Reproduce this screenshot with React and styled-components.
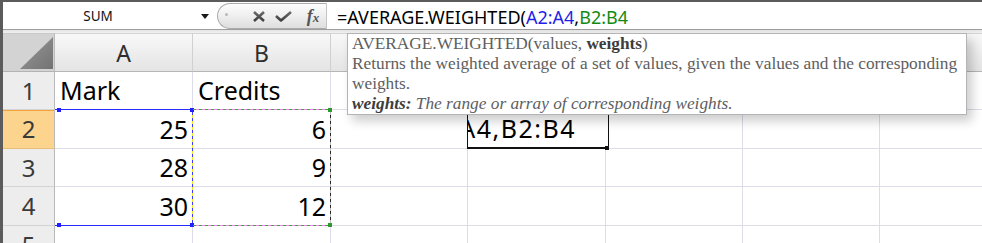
import React from 'react';
import styled, { createGlobalStyle } from 'styled-components';

const Global = createGlobalStyle`
  html, body { margin: 0; padding: 0; background: #fff; }
  body { width: 982px; height: 243px; overflow: hidden; font-family: "Noto Sans", sans-serif; }
  * { box-sizing: border-box; }
`;

const Window = styled.div`
  position: relative;
  width: 982px;
  height: 243px;
  overflow: hidden;
  border-left: 3px solid #5b5b5b;
  border-top: 2px solid #5b5b5b;
  display: flex;
  flex-direction: column;
  background: #fff;
`;

const FormulaBar = styled.div`
  height: 28px;
  flex: none;
  display: flex;
  align-items: stretch;
  background: #fff;
  border-bottom: 1px solid #9e9e9e;
`;

const NameBox = styled.div`
  width: 190px;
  font-family: "Noto Sans", sans-serif;
  font-size: 13.5px;
  line-height: 24px;
  padding-top: 2px;
  text-align: center;
  color: #111;
`;

const DropArea = styled.div`
  width: 24px;
  display: flex;
  align-items: center;
  justify-content: center;
  &::after {
    content: "";
    border-left: 4px solid transparent;
    border-right: 4px solid transparent;
    border-top: 5px solid #1a1a1a;
    margin-top: 2px;
  }
`;

const Pill = styled.div`
  width: 110px;
  margin: 1px 0 0 0;
  height: 26px;
  border: 1px solid #ababab;
  border-right: 1px solid #c4c4c4;
  border-radius: 13px 0 0 13px;
  background: linear-gradient(#fdfdfd, #f0f0f0 45%, #dedede);
  display: flex;
  align-items: center;
  padding-left: 7px;
`;

const Dot = styled.span`
  width: 3px;
  height: 3px;
  border-radius: 50%;
  background: #b8b8b8;
  margin-right: 24px;
  margin-top: -4px;
`;

const IconSlot = styled.span`
  display: flex;
  align-items: center;
  justify-content: center;
  width: ${p => p.$w}px;
  margin-right: ${p => p.$mr}px;
`;

const Fx = styled.span`
  font-family: "Liberation Serif", serif;
  font-style: italic;
  color: #555;
  font-size: 18px;
  line-height: 1;
  font-weight: bold;
  & > small { font-size: 13px; font-weight: bold; }
`;

const FormulaText = styled.div`
  flex: 1;
  padding-left: 10px;
  padding-top: 4px;
  font-family: "Noto Sans", sans-serif;
  font-size: 18px;
  line-height: 23px;
  color: #000;
  white-space: nowrap;
`;

const Ref = styled.span`
  color: ${p => p.$c};
`;

const Spacer = styled.div`
  height: 3px;
  flex: none;
  background: linear-gradient(#e4e4e4, #f0f0f0);
`;

const Sheet = styled.div`
  position: relative;
  display: grid;
  grid-template-columns: 52px 138px 138px 137px 138px 137px 137px 138px;
  grid-template-rows: 39px 38px 39px 38px 39px 38px;
`;

const Corner = styled.div`
  background: #d3d3d3;
  border-right: 1px solid #bcbcbc;
  border-bottom: 1px solid #b3b3b3;
  border-top: 1px solid #c9c9c9;
  position: relative;
  &::after {
    content: "";
    position: absolute;
    right: 1px;
    bottom: 2px;
    width: 33px;
    height: 32px;
    background: linear-gradient(135deg, #9a9a9a, #727272);
    clip-path: polygon(100% 0, 100% 100%, 0 100%);
  }
`;

const ColHead = styled.div`
  background: linear-gradient(#f8f8f8, #ececec 60%, #e4e4e4);
  border-right: 1px solid #d0d0d0;
  border-bottom: 1px solid #b6b6b6;
  border-top: 1px solid #d4d4d4;
  display: flex;
  align-items: center;
  justify-content: center;
  font-size: 23px;
  line-height: 23px;
  padding-top: 1px;
  color: #2e2e2e;
`;

const RowHead = styled.div`
  background: ${p => (p.$active ? '#fdd48e' : '#ededed')};
  box-shadow: ${p => (p.$active ? 'inset 0 1px 0 #f3a33c' : 'none')};
  border-right: 1px solid #b9b9b9;
  border-bottom: 1px solid ${p => (p.$active ? '#e8be78' : '#d3d3d3')};
  display: flex;
  align-items: center;
  justify-content: center;
  font-size: 24px;
  line-height: 24px;
  color: #3a3a3a;
`;

const Cell = styled.div`
  border-right: 1px solid #dcdde8;
  border-bottom: 1px solid #dcdde8;
  display: flex;
  align-items: center;
  justify-content: ${p => (p.$num ? 'flex-end' : 'flex-start')};
  padding: 0 4px 0 5px;
  font-size: 25px;
  line-height: 25px;
  color: #000;
  white-space: nowrap;
  overflow: hidden;
`;

const Frame = styled.div`
  position: absolute;
  left: ${p => p.$x}px;
  top: ${p => p.$y}px;
  width: ${p => p.$w}px;
  height: ${p => p.$h}px;
  pointer-events: none;
`;

const HEdge = styled.div`
  position: absolute;
  left: 0;
  right: 0;
  height: 1px;
  ${p => (p.$bottom ? 'bottom: 0;' : 'top: 0;')}
  background: ${p => p.$bg};
`;

const VEdge = styled.div`
  position: absolute;
  top: 0;
  bottom: 0;
  width: 1px;
  ${p => (p.$right ? 'right: 0;' : 'left: 0;')}
  background: ${p => p.$bg};
`;

const Handle = styled.div`
  position: absolute;
  width: 4px;
  height: 4px;
  background: ${p => p.$c};
  ${p => (p.$right ? 'right: -1px;' : `left: ${p.$inset || -1}px;`)}
  ${p => (p.$bottom ? 'bottom: -1px;' : 'top: -1px;')}
`;

const Editor = styled.div`
  position: absolute;
  left: 464px;
  top: 76px;
  width: 142px;
  height: 40px;
  border: 1px solid #111;
  border-bottom-width: 2px;
  background: #fff;
  overflow: hidden;
  display: flex;
  align-items: center;
  justify-content: flex-end;
  padding-right: 32px;
  font-size: 25px;
  line-height: 25px;
  letter-spacing: 1.5px;
  white-space: nowrap;
  color: #000;
`;

const FillHandle = styled.div`
  position: absolute;
  left: 602px;
  top: 113px;
  width: 4px;
  height: 4px;
  background: #111;
`;

const Tooltip = styled.div`
  position: absolute;
  left: 344px;
  top: 31px;
  width: 620px;
  height: 82px;
  background: #fff;
  border: 1px solid #b4b4b4;
  box-shadow: 5px 6px 10px rgba(0, 0, 0, 0.2);
  padding: 0 4px 0 4px;
  font-family: "Liberation Serif", serif;
  font-size: 17.3px;
  line-height: 20px;
  color: #5e5e5e;
`;

const TipLine = styled.div`
  white-space: nowrap;
`;

const Strong = styled.b`
  color: #3c3c3c;
  font-weight: bold;
`;

const Em = styled.i`
  font-style: italic;
`;

const CloseIcon = () => (
  <svg width="14" height="11" viewBox="0 0 14 11">
    <defs>
      <linearGradient id="gx" x1="0" y1="0" x2="0" y2="1">
        <stop offset="0" stopColor="#6a6a6a" />
        <stop offset="1" stopColor="#3e3e3e" />
      </linearGradient>
    </defs>
    <path d="M2 1 L12 10 M12 1 L2 10" stroke="url(#gx)" strokeWidth="2.6" strokeLinecap="butt" />
  </svg>
);

const CheckIcon = () => (
  <svg width="17" height="11" viewBox="0 0 17 11">
    <defs>
      <linearGradient id="gc" x1="0" y1="0" x2="0" y2="1">
        <stop offset="0" stopColor="#6a6a6a" />
        <stop offset="1" stopColor="#3e3e3e" />
      </linearGradient>
    </defs>
    <path d="M1 5 L6 9.5 L16 1" stroke="url(#gc)" strokeWidth="2.6" fill="none" strokeLinejoin="round" />
  </svg>
);

const dashH = (a, b) => `repeating-linear-gradient(90deg, ${a} 0 3px, ${b} 3px 6px)`;
const dashV = (a, b) => `repeating-linear-gradient(180deg, ${a} 0 3px, ${b} 3px 6px)`;

const cols = ['A', 'B', 'C', 'D', 'E', 'F', 'G'];
const rows = [
  ['Mark', 'Credits'],
  [25, 6],
  [28, 9],
  [30, 12],
  ['', ''],
];

export default function App() {
  return (
    <>
      <Global />
      <Window>
        <FormulaBar>
          <NameBox>SUM</NameBox>
          <DropArea />
          <Pill>
            <Dot />
            <IconSlot $w={14} $mr={9}><CloseIcon /></IconSlot>
            <IconSlot $w={17} $mr={12}><CheckIcon /></IconSlot>
            <IconSlot $w={18} $mr={0}><Fx>f<small>x</small></Fx></IconSlot>
          </Pill>
          <FormulaText>
            =AVERAGE.WEIGHTED(<Ref $c="#1f1fe6">A2:A4</Ref>,<Ref $c="#138a13">B2:B4</Ref>
          </FormulaText>
        </FormulaBar>
        <Spacer />
        <Sheet>
          <Corner />
          {cols.map(c => (
            <ColHead key={c}>{c}</ColHead>
          ))}
          {rows.map((r, i) => (
            <React.Fragment key={i}>
              <RowHead $active={i === 1}>{i + 1}</RowHead>
              {cols.map((c, j) => {
                const v = j < 2 ? r[j] : '';
                return (
                  <Cell key={c} $num={typeof v === 'number'}>
                    {v}
                  </Cell>
                );
              })}
            </React.Fragment>
          ))}

          <Frame $x={52} $y={76} $w={138} $h={117}>
            <HEdge $bg="#2a2aff" />
            <HEdge $bottom $bg="#2a2aff" />
            <VEdge $right $bg={dashV('#e6e63a', '#3a3aff')} />
            <Handle $c="#2020ff" $inset={2} />
            <Handle $c="#2020ff" $right />
            <Handle $c="#2020ff" $bottom $inset={2} />
            <Handle $c="#2020ff" $bottom $right />
          </Frame>

          <Frame $x={190} $y={76} $w={138} $h={117}>
            <HEdge $bg={dashH('#3aa53a', '#e68ae6')} />
            <HEdge $bottom $bg={dashH('#3aa53a', '#e68ae6')} />
            <VEdge $right $bg={dashV('#2a2a2a', '#bdbdbd')} />
            <Handle $c="#2e9a2e" $right />
            <Handle $c="#2e9a2e" $bottom $right />
          </Frame>

          <Editor>=AVERAGE.WEIGHTED(A2:A4,B2:B4</Editor>
          <FillHandle />
        </Sheet>

        <Tooltip>
          <TipLine>AVERAGE.WEIGHTED(values, <Strong>weights</Strong>)</TipLine>
          <TipLine>Returns the weighted average of a set of values, given the values and the corresponding</TipLine>
          <TipLine>weights.</TipLine>
          <TipLine>
            <Strong><Em>weights:</Em></Strong> <Em>The range or array of corresponding weights.</Em>
          </TipLine>
        </Tooltip>
      </Window>
    </>
  );
}
